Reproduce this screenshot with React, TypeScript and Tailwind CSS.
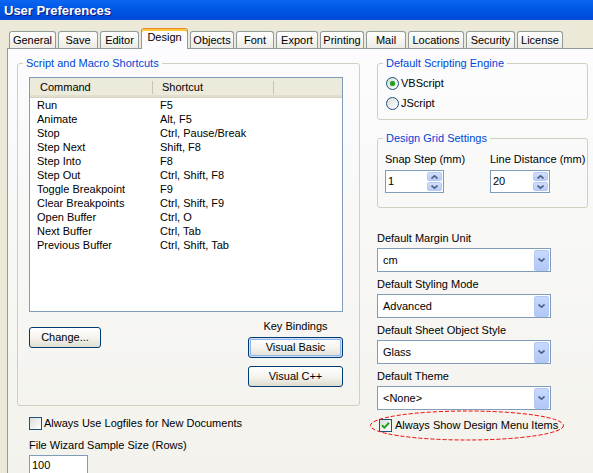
import React from "react";

const tabs = [
    { label: "General", w: "w-[47px]" },
    { label: "Save", w: "w-[40px]" },
    { label: "Editor", w: "w-[39px]" },
    { label: "Design", w: "w-[47px]", active: true },
    { label: "Objects", w: "w-[44px]" },
    { label: "Font", w: "w-[38px]" },
    { label: "Export", w: "w-[42px]" },
    { label: "Printing", w: "w-[44px]" },
    { label: "Mail", w: "w-[40px]" },
    { label: "Locations", w: "w-[56px]" },
    { label: "Security", w: "w-[49px]" },
    { label: "License", w: "w-[46px]" },
];

const shortcuts: [string, string][] = [
    ["Run", "F5"],
    ["Animate", "Alt, F5"],
    ["Stop", "Ctrl, Pause/Break"],
    ["Step Next", "Shift, F8"],
    ["Step Into", "F8"],
    ["Step Out", "Ctrl, Shift, F8"],
    ["Toggle Breakpoint", "F9"],
    ["Clear Breakpoints", "Ctrl, Shift, F9"],
    ["Open Buffer", "Ctrl, O"],
    ["Next Buffer", "Ctrl, Tab"],
    ["Previous Buffer", "Ctrl, Shift, Tab"],
];

const Chevron: React.FC<{ up?: boolean }> = ({ up }) => (
    <svg width="7" height="4" viewBox="0 0 7 4">
        <path
            d={up ? "M0.5 3.5 L3.5 0.8 L6.5 3.5" : "M0.5 0.5 L3.5 3.2 L6.5 0.5"}
            fill="none"
            stroke="#4d6185"
            strokeWidth="1.6"
        />
    </svg>
);

const Checkbox: React.FC<{ checked?: boolean }> = ({ checked }) => (
    <span className="w-[13px] h-[13px] shrink-0 border border-[#1c5180] bg-linear-to-br from-[#dcdcd7] to-white flex items-center justify-center">
        {checked && (
            <svg width="9" height="9" viewBox="0 0 9 9">
                <path d="M1 4.2 L3.4 6.6 L8 1.8" fill="none" stroke="#21a121" strokeWidth="2" />
            </svg>
        )}
    </span>
);

const Radio: React.FC<{ checked?: boolean; label: string }> = ({ checked, label }) => (
    <div className="flex items-center gap-[2px] h-[13px]">
        <span className="w-[13px] h-[13px] rounded-full border border-[#1c5180] bg-linear-to-br from-[#dcdcd7] to-white flex items-center justify-center">
            {checked && <span className="w-[5px] h-[5px] rounded-full bg-[#21a121] shadow-[0_0_1px_#55d855]" />}
        </span>
        <span>{label}</span>
    </div>
);

const Button: React.FC<{ label: string; w: string; primary?: boolean }> = ({ label, w, primary }) => (
    <div
        className={`${w} h-[21px] rounded-[3px] border border-[#003c74] bg-linear-to-b from-white via-[#f5f4ef] to-[#dfddd0] flex items-center justify-center ${
            primary ? "shadow-[inset_0_0_0_1px_#cee0fb,inset_0_0_0_2px_#93b2e9]" : ""
        }`}
    >
        {label}
    </div>
);

const Select: React.FC<{ value: string }> = ({ value }) => (
    <div className="w-[174px] h-[24px] border border-[#7f9db9] bg-white flex items-center pl-[5px] pr-[1px]">
        <span className="flex-1">{value}</span>
        <span className="w-[15px] h-[21px] rounded-[2px] border border-[#b3c8f5] bg-linear-to-b from-[#c8d9fd] to-[#b2c7f6] flex items-center justify-center">
            <Chevron />
        </span>
    </div>
);

const Spinner: React.FC<{ value: string; w: string }> = ({ value, w }) => (
    <div className={`${w} h-[23px] border border-[#7f9db9] bg-white flex`}>
        <span className="flex-1 flex items-center pl-[2px]">{value}</span>
        <div className="w-[16px] flex flex-col py-[1px] pr-[1px] gap-[1px]">
            <span className="flex-1 rounded-[2px] border border-[#b3c8f5] bg-linear-to-b from-[#d2e0fd] to-[#b8cbf6] flex items-center justify-center">
                <Chevron up />
            </span>
            <span className="flex-1 rounded-[2px] border border-[#b3c8f5] bg-linear-to-b from-[#d2e0fd] to-[#b8cbf6] flex items-center justify-center">
                <Chevron />
            </span>
        </div>
    </div>
);

const Group: React.FC<{ title: string; children: React.ReactNode }> = ({ title, children }) => (
    <fieldset className="rounded-[3px] border border-[#d0d0bf] p-0 m-0">
        <legend className="ml-[5px] px-[3px] text-[#0046d5] leading-[13px]">{title}</legend>
        {children}
    </fieldset>
);

export default function App() {
    return (
        <div className="w-[593px] h-[473px] overflow-hidden bg-[#ece9d8] text-black text-[11px] leading-[13px] font-['Liberation_Sans',Arial,sans-serif]">
            {/* window caption */}
            <div className="h-[20px] flex items-center pl-[4px] bg-linear-to-b from-[#0a66f2] via-[#0055e5] to-[#004ad8] text-white font-bold text-[13px] [text-shadow:1px_1px_#0a1883]">
                User Preferences
            </div>

            {/* tab strip */}
            <div className="h-[28px] flex items-end gap-[2px] pl-[9px]">
                {tabs.map((t) =>
                    t.active ? (
                        <div
                            key={t.label}
                            className={`${t.w} h-[21px] -mb-[1px] relative z-10 pb-[3px] border-x border-t border-[#919b9c] border-t-[#e68b2c] rounded-t-[3px] bg-[#fcfcfe] shadow-[inset_0_2px_0_#ffc73c] flex items-center justify-center`}
                        >
                            {t.label}
                        </div>
                    ) : (
                        <div
                            key={t.label}
                            className={`${t.w} h-[17px] border-x border-t border-[#919b9c] rounded-t-[3px] bg-linear-to-b from-white to-[#ecebe5] flex items-center justify-center`}
                        >
                            {t.label}
                        </div>
                    )
                )}
            </div>

            {/* tab page */}
            <div className="ml-[7px] h-[425px] border-l border-t border-[#919b9c] bg-linear-to-b from-[#fcfcfe] to-[#f3f2ec] flex gap-[17px] pl-[9px] pt-[8px]">
                {/* left column */}
                <div className="w-[343px] shrink-0">
                    <Group title="Script and Macro Shortcuts">
                        <div className="pt-[7px] pl-[11px] pb-[18px]">
                            <div className="w-[314px] h-[235px] border border-[#7f9db9] bg-white">
                                <div className="h-[20px] flex items-center bg-[#ebeadb] border-b border-[#d6d2c2] shadow-[inset_0_-2px_0_#e2decd]">
                                    <span className="w-[122px] pl-[10px]">Command</span>
                                    <span className="w-[1px] h-[13px] bg-[#c7c5b2]" />
                                    <span className="w-[120px] pl-[9px]">Shortcut</span>
                                    <span className="w-[1px] h-[13px] bg-[#c7c5b2]" />
                                </div>
                                {shortcuts.map(([cmd, key]) => (
                                    <div key={cmd} className="h-[14px] leading-[14px] flex">
                                        <span className="w-[123px] pl-[7px]">{cmd}</span>
                                        <span className="pl-[7px]">{key}</span>
                                    </div>
                                ))}
                            </div>

                            <div className="w-[314px] mt-[8px] flex justify-between items-start">
                                <div className="mt-[7px]">
                                    <Button label="Change..." w="w-[72px]" />
                                </div>
                                <div className="w-[95px] flex flex-col items-center">
                                    <span>Key Bindings</span>
                                    <div className="mt-[4px]">
                                        <Button label="Visual Basic" w="w-[95px]" primary />
                                    </div>
                                    <div className="mt-[8px]">
                                        <Button label="Visual C++" w="w-[95px]" />
                                    </div>
                                </div>
                            </div>
                        </div>
                    </Group>

                    <div className="ml-[12px] mt-[11px] flex items-center gap-[2px]">
                        <Checkbox />
                        <span>Always Use Logfiles for New Documents</span>
                    </div>
                    <div className="ml-[12px] mt-[9px]">File Wizard Sample Size (Rows)</div>
                    <div className="ml-[12px] mt-[3px] w-[59px] h-[21px] border border-[#7f9db9] bg-white flex items-center pl-[2px]">
                        100
                    </div>
                </div>

                {/* right column */}
                <div className="w-[211px] shrink-0">
                    <Group title="Default Scripting Engine">
                        <div className="pt-[7px] pl-[8px] pb-[9px] flex flex-col gap-[7px]">
                            <Radio checked label="VBScript" />
                            <Radio label="JScript" />
                        </div>
                    </Group>

                    <div className="mt-[12px]">
                        <Group title="Design Grid Settings">
                            <div className="pt-[8px] pl-[7px] pb-[14px] flex">
                                <div className="w-[105px]">
                                    <div>Snap Step (mm)</div>
                                    <div className="mt-[4px]">
                                        <Spinner value="1" w="w-[59px]" />
                                    </div>
                                </div>
                                <div>
                                    <div>Line Distance (mm)</div>
                                    <div className="mt-[4px]">
                                        <Spinner value="20" w="w-[60px]" />
                                    </div>
                                </div>
                            </div>
                        </Group>
                    </div>

                    <div className="mt-[23px] leading-[14px]">Default Margin Unit</div>
                    <div className="mt-[3px]">
                        <Select value="cm" />
                    </div>
                    <div className="mt-[5px] leading-[14px]">Default Styling Mode</div>
                    <div className="mt-[3px]">
                        <Select value="Advanced" />
                    </div>
                    <div className="mt-[5px] leading-[14px]">Default Sheet Object Style</div>
                    <div className="mt-[3px]">
                        <Select value="Glass" />
                    </div>
                    <div className="mt-[5px] leading-[14px]">Default Theme</div>
                    <div className="mt-[3px]">
                        <Select value="<None>" />
                    </div>

                    <div className="relative mt-[9px] ml-[2px] flex items-center gap-[3px]">
                        <Checkbox checked />
                        <span>Always Show Design Menu Items</span>
                        {/* red dashed highlight ring */}
                        <svg
                            className="absolute left-[-10px] top-[-9px] pointer-events-none"
                            width="196"
                            height="31"
                            viewBox="0 0 196 31"
                        >
                            <ellipse cx="98" cy="15.5" rx="96.5" ry="14.5" fill="none" stroke="#ff0000" strokeWidth="1" strokeDasharray="4 2" />
                        </svg>
                    </div>
                </div>
            </div>
        </div>
    );
}
